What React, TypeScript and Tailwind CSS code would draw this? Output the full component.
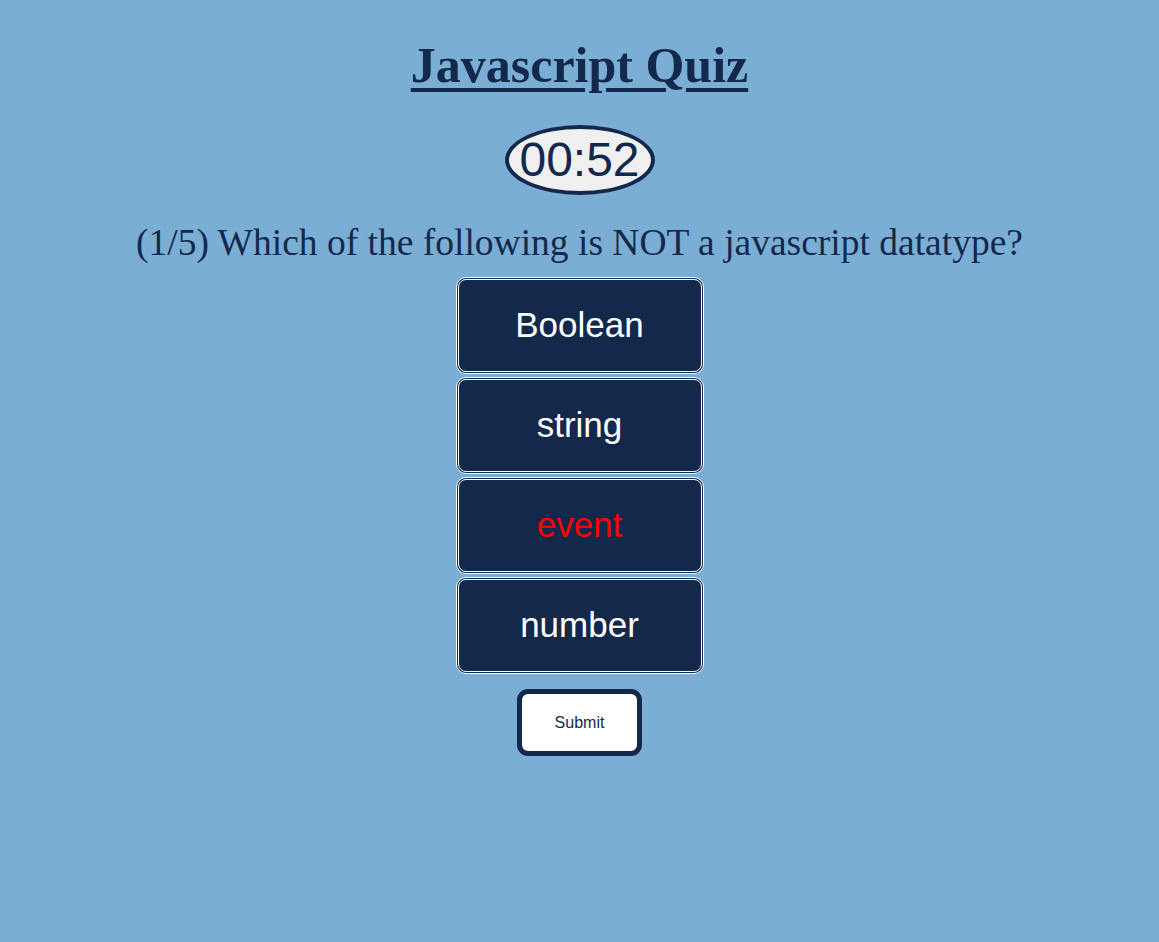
import React from "react";

const answers = [
  { text: "Boolean", red: false },
  { text: "string", red: false },
  { text: "event", red: true },
  { text: "number", red: false },
];

export default function App() {
  return (
    <div className="min-h-[942px] w-full bg-[#7baed4] flex flex-col items-center font-['Liberation_Sans',Arial,sans-serif]">
      <h1 className="mt-[36px] text-[50px] leading-[58px] font-bold underline decoration-[4px] underline-offset-[6px] text-[#13294b] font-['Liberation_Serif','Times_New_Roman',serif]">
        Javascript Quiz
      </h1>
      <div className="mt-[31px] w-[150px] h-[70px] rounded-[50%] border-[4px] border-[#13294b] bg-[#f0f0f0] flex items-center justify-center text-[48px] leading-none text-[#13294b]">
        00:52
      </div>
      <p className="mt-[27px] text-[37.5px] leading-[42px] text-[#13294b] font-['Liberation_Serif','Times_New_Roman',serif]">
        (1/5) Which of the following is NOT a javascript datatype?
      </p>
      <div className="mt-[13px] flex flex-col gap-[3px]">
        {answers.map((a) => (
          <button
            key={a.text}
            className={
              a.red
                ? "w-[248px] h-[97px] rounded-[10px] border-[3px] border-double border-white bg-[#13294b] text-[35px] flex items-center justify-center text-[#ff0000]"
                : "w-[248px] h-[97px] rounded-[10px] border-[3px] border-double border-white bg-[#13294b] text-[35px] flex items-center justify-center text-white"
            }
          >
            {a.text}
          </button>
        ))}
      </div>
      <button className="mt-[15px] w-[125px] h-[67px] rounded-[11px] border-[5px] border-[#13294b] bg-white text-[16px] text-[#13294b] flex items-center justify-center">
        Submit
      </button>
    </div>
  );
}
